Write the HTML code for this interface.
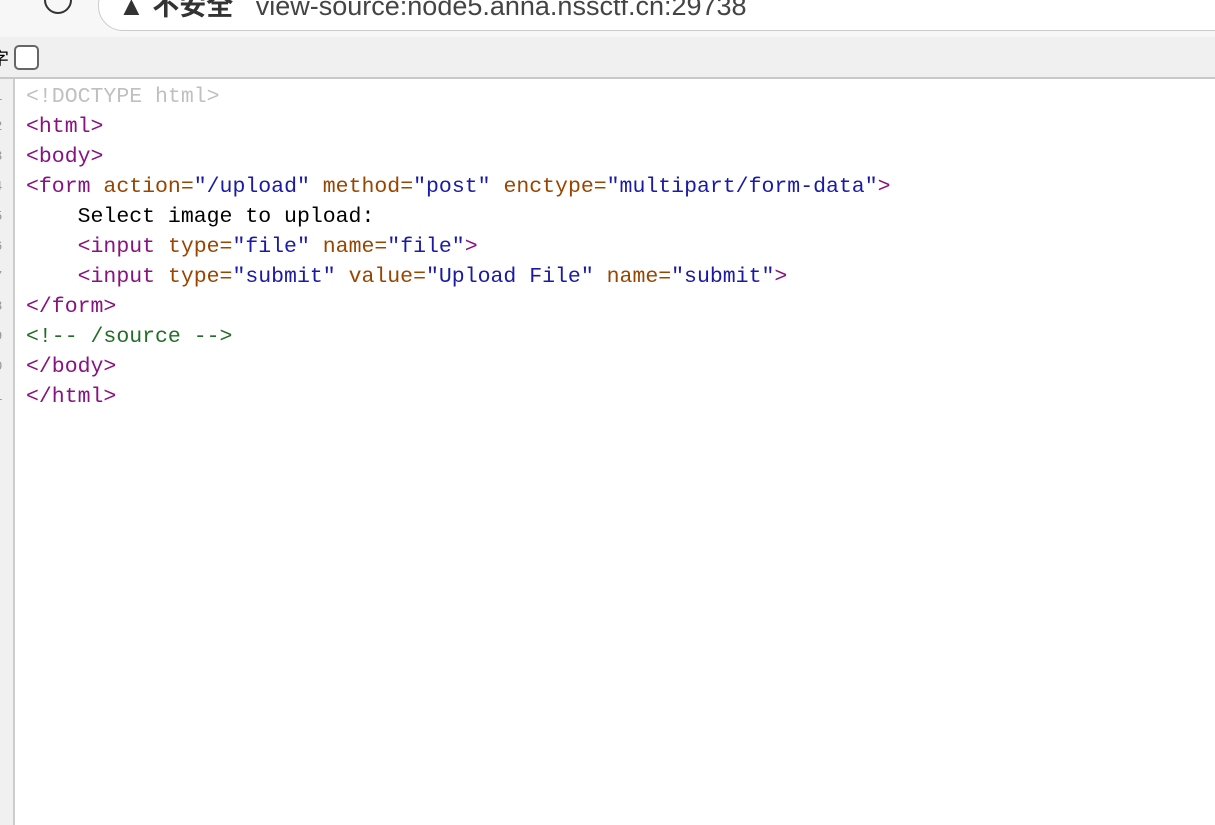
<!DOCTYPE html>
<html><head><style>
body{margin:0;width:1215px;height:825px;overflow:hidden;background:#fff;position:relative;font-family:"Liberation Sans","Noto Sans CJK SC",sans-serif}
.top{position:absolute;left:0;top:0;width:1215px;height:37px;background:#f7f7f7}
.url{position:absolute;left:98px;top:-20px;width:1200px;height:49px;border:1px solid #ccc;border-radius:25px;background:#fff}
.circ{position:absolute;left:44px;top:-14px;width:24px;height:24px;border:2.5px solid #333;border-radius:50%}
.urltext{position:absolute;left:118px;top:-16px;font-size:27px;color:#444;white-space:nowrap}
.bar{position:absolute;left:0;top:37px;width:1215px;height:40px;background:#f0f0f0;border-bottom:2px solid #c8c8c8}
.cb{position:absolute;left:14px;top:8px;width:25px;height:25px;border:2px solid #666;border-radius:5px;background:#fff;box-sizing:border-box}
.gut{position:absolute;left:0;top:79px;width:13px;height:746px;background:#f0f0f0;border-right:2px solid #ccc}
.code{position:absolute;left:26px;top:82px;font-family:"Liberation Mono",monospace;font-size:21.5px;line-height:30px;white-space:pre;color:#000}
.ln{position:absolute;left:-6px;top:82px;font-family:"Liberation Mono",monospace;font-size:14px;line-height:30px;color:#999;white-space:pre}
.t{color:#881280}.a{color:#994500}.v{color:#1a1aa6}.c{color:#236e25}.d{color:#c0c0c0}
</style></head><body>
<div class="top"><div class="circ"></div><div class="url"></div><div class="urltext"><b style="color:#333">▲ 不安全</b>&nbsp;&nbsp; view-source:node5.anna.nssctf.cn:29738</div></div>
<div class="bar"><span style="position:absolute;left:-9px;top:8px;font-size:18px">字</span><div class="cb"></div></div>
<div class="gut"></div>
<div class="ln">1
2
3
4
5
6
7
8
9
0
1</div>
<div class="code"><span class="d">&lt;!DOCTYPE html&gt;</span>
<span class="t">&lt;html&gt;</span>
<span class="t">&lt;body&gt;</span>
<span class="t">&lt;form </span><span class="a">action=</span><span class="v">"/upload"</span> <span class="a">method=</span><span class="v">"post"</span> <span class="a">enctype=</span><span class="v">"multipart/form-data"</span><span class="t">&gt;</span>
    Select image to upload:
    <span class="t">&lt;input </span><span class="a">type=</span><span class="v">"file"</span> <span class="a">name=</span><span class="v">"file"</span><span class="t">&gt;</span>
    <span class="t">&lt;input </span><span class="a">type=</span><span class="v">"submit"</span> <span class="a">value=</span><span class="v">"Upload File"</span> <span class="a">name=</span><span class="v">"submit"</span><span class="t">&gt;</span>
<span class="t">&lt;/form&gt;</span>
<span class="c">&lt;!-- /source --&gt;</span>
<span class="t">&lt;/body&gt;</span>
<span class="t">&lt;/html&gt;</span></div>
</body></html>
